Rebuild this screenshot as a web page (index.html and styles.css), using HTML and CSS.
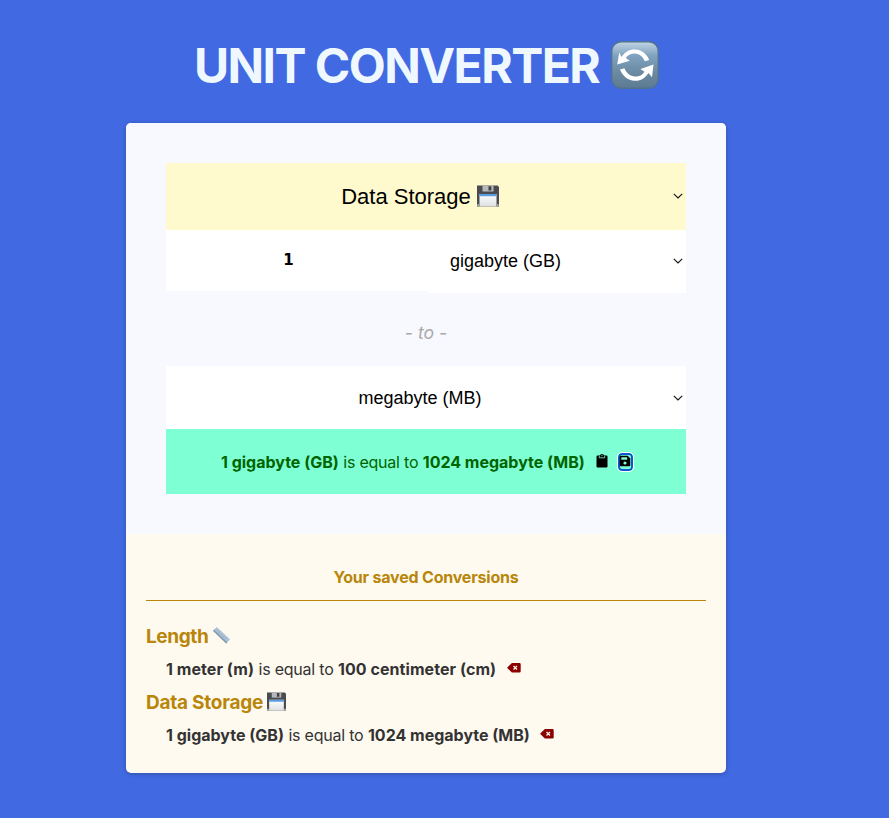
FILE: index.html
```html
<!DOCTYPE html>
<html lang="en">
<head>
<meta charset="utf-8">
<title>Unit Converter</title>
<link rel="stylesheet" href="styles.css">
</head>
<body>
<svg class="defs" width="0" height="0">
  <defs>
    <linearGradient id="key" x1="0" y1="0" x2="0" y2="1"><stop offset="0" stop-color="#c3d5e4"/><stop offset=".13" stop-color="#a5bfd4"/><stop offset=".3" stop-color="#7fa2be"/><stop offset=".65" stop-color="#6c8ba3"/><stop offset="1" stop-color="#5c7a91"/></linearGradient>
    <linearGradient id="paper" x1="0" y1="0" x2="0" y2="1"><stop offset="0" stop-color="#fff"/><stop offset="1" stop-color="#dedfe2"/></linearGradient>
    <symbol id="floppy" viewBox="0 0 22 22">
      <path d="M0 .5H20.500L22 2V21.500H0Z" fill="#4b4c50"/>
      <path d="M5.500 .5H16.500V6.500H5.500Z" fill="#b6b8bb"/>
      <path d="M11.500 1.200H14.300V5.500H11.500Z" fill="#3f4043"/>
      <path d="M2.500 9H19.500V21.500H2.500Z" fill="url(#paper)"/>
      <path d="M2.500 9H19.500V11.300H2.500Z" fill="#5b9ee0"/>
      <path d="M.5 19.300H1.800V20.700H.5ZM20.200 19.300H21.500V20.700H20.200Z" fill="#e4e4e6"/>
    </symbol>
    <symbol id="chevron" viewBox="0 0 10 6"><path d="M.8 .8L5 5L9.200 .8" fill="none" stroke="#111" stroke-width="1.100"/></symbol>
    <symbol id="erase" viewBox="0 0 14 10"><path d="M4.600 .3Q4.900 0 5.400 0H12.500Q13.700 0 13.700 1.200V8.300Q13.700 9.500 12.500 9.500H5.400Q4.900 9.500 4.600 9.200L.5 5.300Q0 4.750 .5 4.200Z" fill="#8b0000"/><path d="M6.500 3L10 6.500M10 3L6.500 6.500" stroke="#fffaf0" stroke-width="1.200"/></symbol>
  </defs>
</svg>
<main class="page">
  <h1 class="title"><span>UNIT CONVERTER</span>
    <svg class="title-icon" viewBox="0 0 48 48"><rect x=".7" y=".7" width="46.600" height="46.600" rx="9.500" fill="url(#key)" stroke="#527390" stroke-width="1.400"/><path d="M10.500 16C14 10.500 19 8 24.500 8.500C31 9 36 13 38.200 19L33.800 20.300C31.800 15.600 28.500 12.800 24 12.500C20 12.300 17 13.800 14.800 17L18.800 19.800L6.200 23.600L8.300 11.500Z" fill="#fff"/><path d="M37.500 32C34 37.500 29 40.300 23.500 39.800C17 39.300 11.500 35 9 28.500L13.400 27.300C15.500 32.300 19.500 35.400 24 35.600C28 35.800 31.500 34 33.500 30.700L29.500 28L42.500 23.600L41 36.200Z" fill="#fff"/></svg>
  </h1>
  <div class="card">
    <section class="converter">
      <div class="select category"><span class="category-name">Data Storage</span><svg class="floppy"><use href="#floppy"/></svg><svg class="chevron"><use href="#chevron"/></svg></div>
      <div class="from">
        <div class="amount">1</div>
        <div class="select unit from-unit"><span>gigabyte (GB)</span><svg class="chevron"><use href="#chevron"/></svg></div>
      </div>
      <div class="to">- to -</div>
      <div class="select unit"><span>megabyte (MB)</span><svg class="chevron"><use href="#chevron"/></svg></div>
      <div class="result">
        <p class="sentence"><b>1 gigabyte (GB)</b> <span class="equal">is equal to</span> <b>1024 megabyte (MB)</b></p>
        <svg class="copy" viewBox="0 0 12 14"><path d="M1.500 1.500H3.700Q4.300 0 6 0T8.300 1.500H10.500Q11.500 1.500 11.500 2.500V12.500Q11.500 13.500 10.500 13.500H1.500Q.5 13.500 .5 12.500V2.500Q.5 1.500 1.500 1.500Z"/><path d="M3.300 2V3.800H8.700V2" fill="none" stroke="#7fffd4" stroke-width=".8"/><circle cx="6" cy="1.700" r=".6" fill="#7fffd4"/></svg>
        <button class="save" aria-label="Save"><svg viewBox="0 0 12 12"><path d="M1.700 .8H8.700L11.300 3.400V10.300Q11.300 11.300 10.300 11.300H1.700Q.7 11.300 .7 10.300V1.800Q.7 .8 1.700 .8Z"/><path d="M2.300 2.300H8.200V4.700H2.300Z" fill="#7fffd4"/><circle cx="6" cy="8" r="1.600" fill="#7fffd4"/></svg></button>
      </div>
    </section>
    <section class="saved">
      <h2 class="saved-title"><span>Your saved Conversions</span></h2>
      <h3 class="group"><span>Length</span><svg class="ruler" viewBox="0 0 20 20"><path d="M1 5L5 1L19 14L15 18.500Z" fill="#a9bfd2"/><path d="M1 5L15 18.500L16 17.300L2 3.900Z" fill="#8097ad"/><path d="M5 1L19 14L18.300 14.800L4.300 1.800Z" fill="#c5d7e5"/><path d="M6.500 3.500L5.500 4.600M8.700 5.500L7.300 7M11 7.600L10 8.700M13.200 9.700L11.800 11.200M15.500 11.800L14.500 12.900" stroke="#7f98ae" stroke-width=".7"/></svg></h3>
      <p class="entry"><b>1 meter (m)</b> <span class="equal">is equal to</span> <b>100 centimeter (cm)</b><svg class="erase"><use href="#erase"/></svg></p>
      <h3 class="group"><span class="storage">Data Storage</span><svg class="floppy small"><use href="#floppy"/></svg></h3>
      <p class="entry data-entry"><b>1 gigabyte (GB)</b> <span class="equal">is equal to</span> <b>1024 megabyte (MB)</b><svg class="erase"><use href="#erase"/></svg></p>
    </section>
  </div>
</main>
</body>
</html>
```
FILE: styles.css
```css
* { box-sizing: border-box; }
body { margin: 0; min-height: 818px; background: #4169e1; color: #333; font-family: Inter, "Liberation Sans", sans-serif; font-size: 16px; }
.defs { display: block; height: 0; }
h1, h2, h3, p { margin: 0; }
svg { flex: none; }
.page { width: 600px; margin-left: 126px; padding-top: 41px; }
.title { display: flex; height: 82.400px; padding-left: 68px; gap: 11px; color: #f0f8ff; font-size: 48px; line-height: 49px; font-weight: 700; white-space: nowrap; }
.title > span { width: 406px; letter-spacing: -1.55px; }
.title-icon { width: 48px; height: 48px; }
.card { height: 649.300px; border-radius: 5px; overflow: hidden; background: #fffaf0; box-shadow: 0 1px 4px rgba(0, 0, 0, .25); }
.converter { height: 410.600px; padding: 40px; background: #f8f8ff; }
.select { display: flex; align-items: center; justify-content: center; position: relative; background: #fff; color: #000; font-family: "Liberation Sans", Arial, sans-serif; }
.select > span { padding-top: 1px; }
.chevron { position: absolute; right: 3px; top: 50%; width: 10px; height: 6px; margin-top: -3px; }
.category { height: 66.200px; padding-right: 12px; gap: 6px; background: #fffacd; font-size: 22px; }
.floppy { width: 22px; height: 22px; }
.from { display: flex; height: 62.800px; }
.amount { width: 261px; height: 61px; margin-top: .5px; padding-right: 16px; background: #fff; color: #000; font: bold 15px/60px "DejaVu Sans", sans-serif; text-align: center; }
.unit { height: 63px; font-size: 18px; padding-right: 12px; }
.from-unit { flex: 1; padding-right: 102px; }
.to { height: 74px; line-height: 81px; text-align: center; color: #a9a9a9; font-size: 17.600px; font-style: italic; }
.result { display: flex; align-items: center; height: 65px; padding-left: 55px; background: #7fffd4; color: #006400; }
.sentence { white-space: nowrap; letter-spacing: -.01px; }
.equal { letter-spacing: -.22px; }
.copy { width: 12px; height: 14px; margin: -2px 0 0 11px; }
.save { width: 15px; height: 18px; padding: 1px; margin-left: 10px; display: flex; align-items: center; justify-content: center; border: 2px solid #0b57d0; border-radius: 4px; outline: 1px solid #fff; background: #7fffd4; }
.save svg { width: 12px; height: 12px; margin-top: -2px; }
.saved { padding: 20px; color: #333; }
.saved-title { height: 47px; border-bottom: 1px solid #b8860b; line-height: 47px; text-align: center; color: #b8860b; font-size: 16px; letter-spacing: -.2px; }
.group { display: flex; align-items: center; height: 32px; gap: 4px; color: #b8860b; font-size: 19px; letter-spacing: -.4px; }
.group > span { padding-top: 1px; }
.storage { letter-spacing: -.25px; }
.saved-title + .group { margin-top: 19px; }
.ruler { width: 19px; height: 19px; }
.small { width: 19px; height: 19px; }
.entry { display: flex; align-items: center; height: 34px; padding-left: 20px; gap: 4.500px; white-space: nowrap; letter-spacing: .06px; }
.data-entry { letter-spacing: 0; }
.erase { width: 14px; height: 10px; margin: -2px 0 0 6px; }
```
